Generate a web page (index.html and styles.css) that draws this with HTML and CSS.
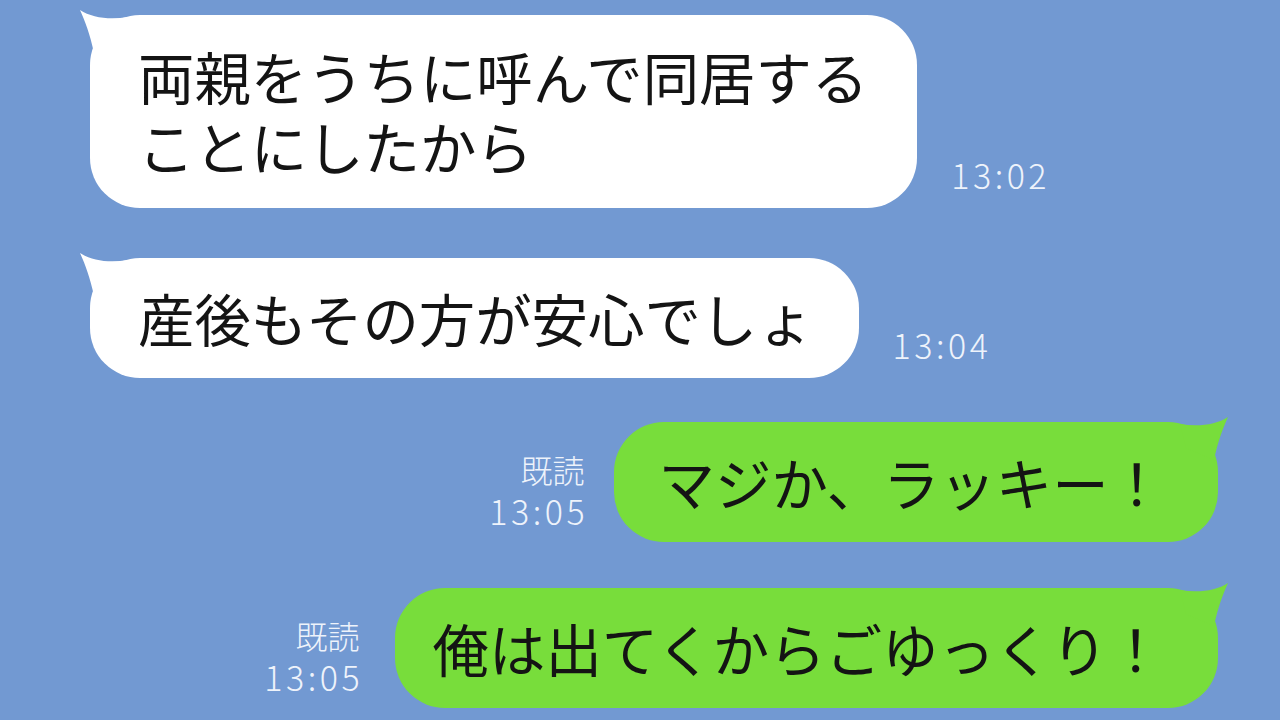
FILE: index.html
```html
<!DOCTYPE html>
<html lang="ja">
  <head>
    <meta charset="utf-8">
    <link rel="stylesheet" href="styles.css">
  </head>
  <body>
    <div class="chat">
      <div class="row row-in first">
        <div class="bubble bubble-in">
          <svg class="tail" width="70" height="60" viewBox="0 0 70 60"><path d="M2,3 C7,14 12,27 16,46 L44,34 L50,10 C32,13 14,11 2,3 Z"/></svg>
          <p>両親をうちに呼んで同居する<br>ことにしたから</p>
        </div>
        <div class="meta"><span class="time">13:02</span></div>
      </div>

      <div class="row row-in second">
        <div class="bubble bubble-in">
          <svg class="tail" width="70" height="60" viewBox="0 0 70 60"><path d="M2,3 C7,14 12,27 16,46 L44,34 L50,10 C32,13 14,11 2,3 Z"/></svg>
          <p>産後もその方が安心でしょ</p>
        </div>
        <div class="meta"><span class="time">13:04</span></div>
      </div>

      <div class="row row-out third">
        <div class="meta"><span class="read">既読</span><span class="time">13:05</span></div>
        <div class="bubble bubble-out">
          <svg class="tail" width="70" height="60" viewBox="0 0 70 60"><path d="M2,3 C7,14 12,27 16,46 L44,34 L50,10 C32,13 14,11 2,3 Z"/></svg>
          <p>マジか、ラッキー！</p>
        </div>
      </div>

      <div class="row row-out fourth">
        <div class="meta"><span class="read">既読</span><span class="time">13:05</span></div>
        <div class="bubble bubble-out">
          <svg class="tail" width="70" height="60" viewBox="0 0 70 60"><path d="M2,3 C7,14 12,27 16,46 L44,34 L50,10 C32,13 14,11 2,3 Z"/></svg>
          <p>俺は出てくからごゆっくり！</p>
        </div>
      </div>
    </div>
  </body>
</html>
```

FILE: styles.css
```css
html,
body {
  margin: 0;
  padding: 0;
  height: 100%;
  overflow: hidden;
}

body {
  background-color: #7299d2;
  font-family: "Noto Sans CJK JP", "Noto Sans", sans-serif;
  color: #141414;
}

.chat {
  display: flex;
  flex-direction: column;
}

.row {
  display: flex;
  align-items: flex-end;
}

.row-in {
  padding-left: 90px;
}

.row-out {
  justify-content: flex-end;
  padding-right: 62px;
}

.first {
  margin-top: 15px;
}

.second {
  margin-top: 50px;
}

.third {
  margin-top: 44px;
}

.fourth {
  margin-top: 46px;
}

.bubble {
  position: relative;
  border-radius: 50px;
  padding: 25px 45px 25px 48px;
}

.bubble p {
  margin: 0;
  font-size: 56.4px;
  line-height: 70px;
  white-space: nowrap;
  position: relative;
}

.first .bubble {
  padding: 26px 49px 27px 48px;
}

.bubble-in {
  background-color: #fff;
  fill: #fff;
}

.bubble-out {
  background-color: #78dd3b;
  fill: #78dd3b;
}

.third .bubble {
  padding-left: 45px;
  padding-right: 53px;
}

.fourth .bubble {
  padding-left: 38px;
  padding-right: 54px;
}

.tail {
  position: absolute;
  top: -8px;
  left: -12px;
}

.bubble-out .tail {
  left: auto;
  right: -12px;
  transform: scaleX(-1);
}

.meta {
  display: flex;
  flex-direction: column;
  color: #eef3fb;
  font-weight: 300;
}

.meta .time {
  font-size: 34px;
  letter-spacing: 3.5px;
  line-height: 42px;
}

.meta .read {
  font-size: 32px;
  line-height: 42px;
}

.row-in .meta {
  margin-left: 34px;
  margin-bottom: 12px;
}

.row-out .meta {
  align-items: flex-end;
  margin-right: 29px;
  margin-bottom: 10px;
}

.row-out .meta .time {
  margin-right: -3.5px;
}

.fourth .meta {
  margin-right: 35px;
}
```
